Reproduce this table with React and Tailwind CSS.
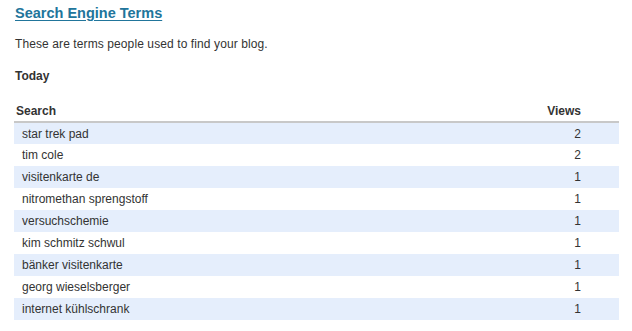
const terms = [
  ['star trek pad', 2],
  ['tim cole', 2],
  ['visitenkarte de', 1],
  ['nitromethan sprengstoff', 1],
  ['versuchschemie', 1],
  ['kim schmitz schwul', 1],
  ['bänker visitenkarte', 1],
  ['georg wieselsberger', 1],
  ['internet kühlschrank', 1],
];

export default function App() {
  return (
    <div className="w-[632px] h-[331px] bg-white overflow-hidden pl-[15px] pr-[13px] pt-[4px] font-['Liberation_Sans',Arial,sans-serif] text-[#333]">
      <h2 className="text-[14.5px] font-bold leading-[18px] text-[#21759b] underline underline-offset-2">
        Search Engine Terms
      </h2>
      <p className="mt-[15px] text-[12px] tracking-[0.1px] leading-[14px]">
        These are terms people used to find your blog.
      </p>
      <h3 className="mt-[18px] text-[12px] font-bold leading-[14px]">Today</h3>
      <table className="mt-[20px] -ml-px w-[605px] border-collapse text-[12px]">
        <thead>
          <tr className="border-b-2 border-[#c8c8c8]">
            <th className="pl-[2px] pt-[1px] pb-[3px] text-left font-bold leading-[14px]">Search</th>
            <th className="pr-[38px] pt-[1px] pb-[3px] text-right font-bold leading-[14px]">Views</th>
          </tr>
        </thead>
        <tbody>
          {terms.map(([term, views], i) => (
            <tr key={term} className={i % 2 === 0 ? 'bg-[#e5eefc]' : 'bg-white'}>
              <td className="h-[22px] pl-[8px] leading-[14px]">{term}</td>
              <td className="h-[22px] pr-[38px] text-right leading-[14px]">{views}</td>
            </tr>
          ))}
        </tbody>
      </table>
    </div>
  );
}
